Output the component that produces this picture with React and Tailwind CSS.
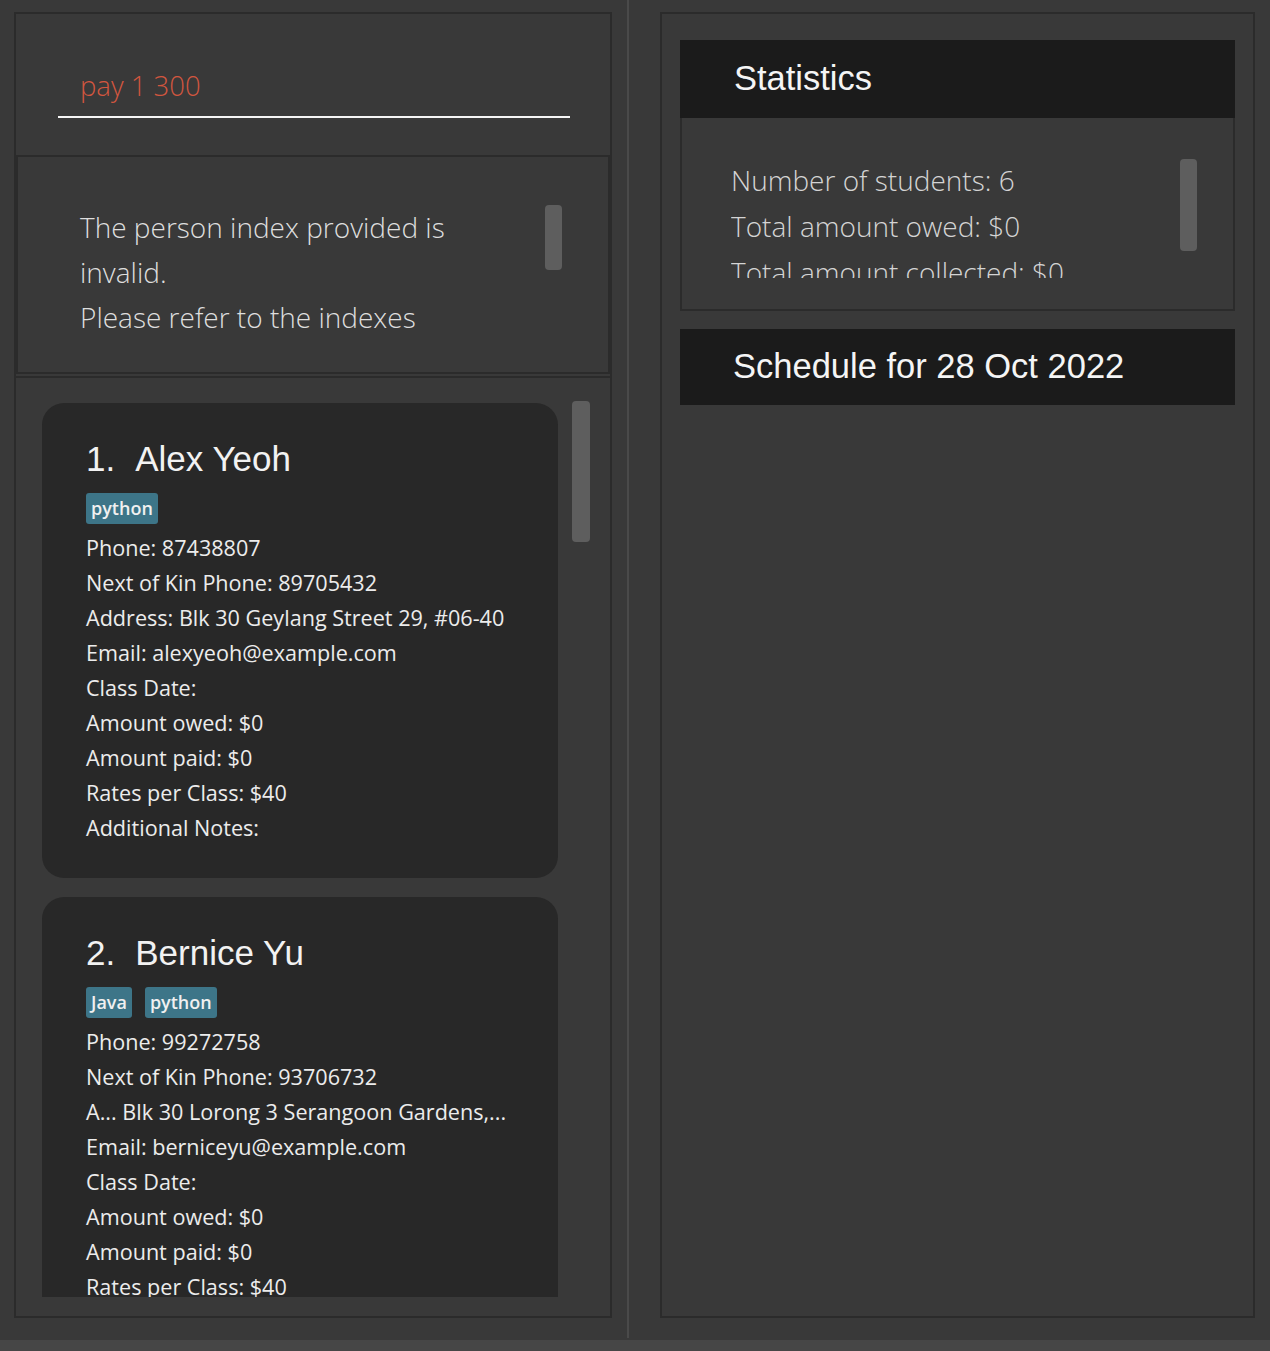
import React from "react";

const light = { fontFamily: '"Open Sans", "Noto Sans", sans-serif', fontWeight: 300 };

function Tag({ children }) {
  return (
    <span className="inline-flex h-[31px] items-center rounded-[3px] bg-[#3d7588] px-[5px] text-[18px] font-semibold text-[#f0f0f0]" style={{ fontFamily: '"Open Sans", sans-serif' }}>
      {children}
    </span>
  );
}

function Card({ idx, name, tags, lines, h }) {
  return (
    <div className={`shrink-0 rounded-[22px] bg-[#282828] pl-[44px] pt-[33px] ${h}`}>
      <div className="flex items-baseline text-[35px] leading-[46px] text-[#f2f2f2]" style={{ fontFamily: '"Liberation Sans", Arial, sans-serif' }}>
        <span>{idx}.</span>
        <span className="ml-[20px]">{name}</span>
      </div>
      <div className="mt-[11px] flex gap-[13px]">
        {tags.map((t) => (
          <Tag key={t}>{t}</Tag>
        ))}
      </div>
      <div className="mt-[6px] text-[21.6px] leading-[35px] text-[#ececec]" style={{ fontFamily: '"Open Sans", "Noto Sans", sans-serif' }}>
        {lines.map((l, i) => (
          <div key={i} className="whitespace-nowrap">{l}</div>
        ))}
      </div>
    </div>
  );
}

export default function App() {
  return (
    <div className="flex h-[1351px] w-[1270px] flex-col overflow-hidden bg-[#393939]">
      <div className="flex h-[1340px] flex-row">
        {/* Left column */}
        <div className="pl-[14px] pt-[12px]">
          <div className="flex h-[1306px] w-[598px] flex-col border-2 border-[#2b2b2b]">
            {/* command box */}
            <div className="h-[141px] shrink-0 pl-[42px] pr-[40px] pt-[52px]">
              <div className="border-b-2 border-[#f5f5f5] pb-[10px] pl-[22px] text-[27.5px] leading-[40px] text-[#d2563f]" style={light}>
                pay 1 300
              </div>
            </div>
            {/* result display */}
            <div className="flex h-[219px] shrink-0 border-2 border-[#2b2b2b] pl-[62px] pr-[46px] pt-[48px]">
              <div className="flex-1 text-[28px] leading-[45px] text-[#dedede]" style={light}>
                <div>The person index provided is</div>
                <div>invalid.</div>
                <div>Please refer to the indexes</div>
              </div>
              <div className="h-[65px] w-[17px] rounded-[4px] bg-[#5e5e5e]" />
            </div>
            {/* person list */}
            <div className="mt-[2px] flex min-h-0 flex-1 border-t-2 border-[#2b2b2b] pl-[26px] pr-[20px] pt-[25px] pb-[19px]">
              <div className="flex min-h-0 flex-1 flex-col gap-[19px] overflow-hidden">
                <Card
                  idx={1}
                  name="Alex Yeoh"
                  tags={["python"]}
                  h="h-[475px]"
                  lines={[
                    "Phone: 87438807",
                    "Next of Kin Phone: 89705432",
                    "Address: Blk 30 Geylang Street 29, #06-40",
                    "Email: alexyeoh@example.com",
                    "Class Date:",
                    "Amount owed: $0",
                    "Amount paid: $0",
                    "Rates per Class: $40",
                    "Additional Notes:",
                  ]}
                />
                <Card
                  idx={2}
                  name="Bernice Yu"
                  tags={["Java", "python"]}
                  h="h-[475px]"
                  lines={[
                    "Phone: 99272758",
                    "Next of Kin Phone: 93706732",
                    "A... Blk 30 Lorong 3 Serangoon Gardens,...",
                    "Email: berniceyu@example.com",
                    "Class Date:",
                    "Amount owed: $0",
                    "Amount paid: $0",
                    "Rates per Class: $40",
                    "Additional Notes:",
                  ]}
                />
              </div>
              <div className="ml-[14px] mt-[-2px] h-[141px] w-[18px] shrink-0 rounded-[4px] bg-[#5e5e5e]" />
            </div>
          </div>
        </div>
        {/* divider */}
        <div className="ml-[15px] h-[1338px] w-[2px] bg-[#4a4a4a]" />
        {/* Right column */}
        <div className="pl-[31px] pt-[12px]">
          <div className="h-[1306px] w-[595px] border-2 border-[#2b2b2b] px-[18px] pt-[26px]">
            <div className="flex h-[78px] items-center bg-[#1b1b1b] pl-[54px] text-[34.5px] text-[#f5f5f5]" style={{ fontFamily: '"Liberation Sans", Arial, sans-serif' }}>
              Statistics
            </div>
            <div className="flex h-[193px] border-x-2 border-b-2 border-[#2b2b2b] pl-[49px] pr-[36px] pt-[39px]">
              <div className="h-[121px] flex-1 overflow-hidden text-[28px] leading-[46px] text-[#d4d4d4]" style={light}>
                <div>Number of students: 6</div>
                <div>Total amount owed: $0</div>
                <div>Total amount collected: $0</div>
              </div>
              <div className="mt-[2px] h-[92px] w-[17px] rounded-[4px] bg-[#5e5e5e]" />
            </div>
            <div className="mt-[18px] flex h-[76px] items-center bg-[#1b1b1b] pl-[53px] text-[34.5px] text-[#f5f5f5]" style={{ fontFamily: '"Liberation Sans", Arial, sans-serif' }}>
              Schedule for 28 Oct 2022
            </div>
          </div>
        </div>
      </div>
      <div className="h-[11px] bg-[#464646]" />
    </div>
  );
}
